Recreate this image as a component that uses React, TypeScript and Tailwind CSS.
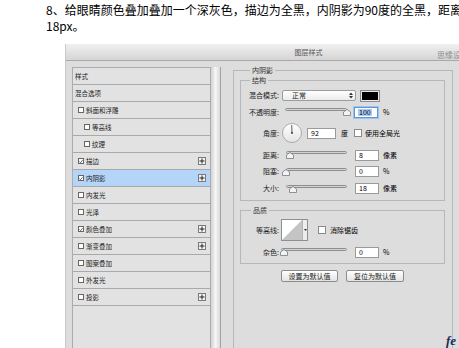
import React from 'react';

const font = "font-['Noto_Sans_CJK_SC','Noto_Sans',sans-serif]";

const layers = [
  { label: '样式', box: false, indent: 0 },
  { label: '混合选项', box: false, indent: 0 },
  { label: '斜面和浮雕', box: true, indent: 5 },
  { label: '等高线', box: true, indent: 11 },
  { label: '纹理', box: true, indent: 11 },
  { label: '描边', box: true, checked: true, plus: true, indent: 5 },
  { label: '内阴影', box: true, checked: true, plus: true, active: true, indent: 5 },
  { label: '内发光', box: true, indent: 5 },
  { label: '光泽', box: true, indent: 5 },
  { label: '颜色叠加', box: true, checked: true, plus: true, indent: 5 },
  { label: '渐变叠加', box: true, plus: true, indent: 5 },
  { label: '图案叠加', box: true, indent: 5 },
  { label: '外发光', box: true, indent: 5 },
  { label: '投影', box: true, plus: true, indent: 5 },
];

const SmallCheck = ({ checked }: { checked?: boolean }) => (
  <span className="w-[6px] h-[6px] border border-[#666] bg-white flex items-center justify-center shrink-0">
    {checked && (
      <svg width="5" height="5" viewBox="0 0 5 5">
        <path d="M0.5 2.5 L2 4 L4.5 0.8" fill="none" stroke="#333" strokeWidth="0.9" />
      </svg>
    )}
  </span>
);

const PlusBox = () => (
  <span className="ml-auto mr-[4px] w-[8px] h-[8px] border border-[#7a7a7a] bg-[#f4f4f4] flex items-center justify-center">
    <svg width="6" height="6" viewBox="0 0 6 6">
      <path d="M3 0.5 V5.5 M0.5 3 H5.5" stroke="#222" strokeWidth="1" />
    </svg>
  </span>
);

const Slider = ({ width, pct }: { width: number; pct: number }) => (
  <div className="relative h-[10px] shrink-0" style={{ width }}>
    <div className="absolute left-0 right-0 top-[1px] h-[3px] rounded-[2px] border border-[#8e8e8e] bg-gradient-to-b from-[#b9b9b9] to-[#ededed]" />
    <svg
      className="absolute top-[2px]"
      style={{ left: Math.round(pct * width) - 4 }}
      width="8"
      height="7"
      viewBox="0 0 8 7"
    >
      <polygon points="0.5,6.5 0.5,3 4,0.5 7.5,3 7.5,6.5" fill="#f3f3f3" stroke="#7a7a7a" strokeWidth="0.8" />
    </svg>
  </div>
);

const Field = ({ value, w, ml, focus }: { value: string; w: string; ml: string; focus?: boolean }) => (
  <div
    className={`${w} ${ml} h-[11px] bg-white flex items-center pl-[3px] text-[7px] leading-none shrink-0 ${
      focus ? 'border border-[#5d95d6] shadow-[0_0_0_1px_#9ec3ee]' : 'border border-[#9a9a9a]'
    }`}
  >
    {focus ? <span className="bg-[#a9c9f2] px-[1px]">{value}</span> : value}
  </div>
);

const Label = ({ children }: { children: React.ReactNode }) => (
  <span className="w-[38px] text-right text-[7px] leading-none text-[#222] shrink-0">{children}</span>
);

const Check = ({ ml }: { ml: string }) => (
  <span className={`block ${ml} w-[8px] h-[8px] border border-[#8a8a8a] bg-white shrink-0`} />
);

export default function App() {
  return (
    <div className={`relative w-[459px] h-[348px] overflow-hidden bg-white ${font}`}>
      <div className="pl-[46px] pt-[2px] text-[12px] leading-[16px] text-black whitespace-nowrap">
        <p>8、给眼睛颜色叠加叠加一个深灰色，描边为全黑，内阴影为90度的全黑，距离</p>
        <p>18px。</p>
      </div>

      <div className="ml-[65px] mt-[10px] w-[486px] bg-[#dddddd] border-l border-[#c9c9c9]">
        <div className="h-[17px] bg-gradient-to-b from-[#f0f0f0] to-[#d5d5d5] border-b border-[#a9a9a9] flex items-center justify-center text-[7px] text-[#555]">
          图层样式
        </div>

        <div className="flex items-start pl-[6px] h-[300px]">
          <div className="flex mt-[6px] h-[290px]">
            <div className="w-[139px] border border-[#acacac] bg-[#e2e2e2] flex flex-col">
              {layers.map((l) => (
                <div
                  key={l.label}
                  className={`h-[17px] shrink-0 border-b border-[#a9a9a9] flex items-center gap-[2px] text-[6.5px] leading-none text-[#222] ${
                    l.active ? 'bg-[#b5d5f8]' : ''
                  }`}
                  style={{ paddingLeft: l.box ? l.indent : 2 }}
                >
                  {l.box && <SmallCheck checked={l.checked} />}
                  <span>{l.label}</span>
                  {l.plus && <PlusBox />}
                </div>
              ))}
            </div>
            <div className="w-[10px] bg-gradient-to-r from-[#d2d2d2] via-[#f6f6f6] to-[#dadada] border-r border-[#a2a2a2]" />
          </div>

          <fieldset className="ml-[12px] mt-[4px] w-[220px] h-[300px] border border-[#b7b7b7] pl-[6px] pr-[7px]">
            <legend className="ml-[10px] px-[2px] text-[7px] leading-[10px] text-[#333]">内阴影</legend>

            <fieldset className="w-[205px] border border-[#b7b7b7] pt-[3px] pb-[3px]">
              <legend className="ml-[9px] px-[2px] text-[7px] leading-[10px] text-[#333]">结构</legend>

              <div className="h-[15px] flex items-center">
                <Label>混合模式:</Label>
                <div className="ml-[3px] w-[74px] h-[11px] rounded-[2px] border border-[#9c9c9c] bg-gradient-to-b from-white to-[#ececec] flex items-center pl-[9px] pr-[2px] text-[7px] leading-none text-[#222]">
                  <span>正常</span>
                  <svg className="ml-auto" width="4" height="7" viewBox="0 0 4 7">
                    <path d="M0 3 L2 0.5 L4 3 Z M0 4 L2 6.5 L4 4 Z" fill="#333" />
                  </svg>
                </div>
                <div className="ml-[4px] w-[20px] h-[12px] border border-[#8a8a8a] p-[1px] bg-[#e8e8e8]">
                  <div className="w-full h-full bg-black" />
                </div>
              </div>

              <div className="mt-[1px] h-[16px] flex items-center">
                <Label>不透明度:</Label>
                <div className="ml-[6px]">
                  <Slider width={62} pct={1} />
                </div>
                <Field value="100" w="w-[24px]" ml="ml-[7px]" focus />
                <span className="ml-[5px] text-[7px] leading-none">%</span>
              </div>

              <div className="mt-[2px] h-[22px] flex items-center">
                <Label>角度:</Label>
                <svg className="ml-[3px] shrink-0" width="20" height="20" viewBox="0 0 20 20">
                  <defs>
                    <linearGradient id="dial" x1="0" y1="0" x2="0" y2="1">
                      <stop offset="0" stopColor="#ffffff" />
                      <stop offset="1" stopColor="#e4e4e4" />
                    </linearGradient>
                  </defs>
                  <circle cx="10" cy="10" r="9.5" fill="url(#dial)" stroke="#9a9a9a" strokeWidth="0.8" />
                  <line x1="10" y1="10" x2="9.7" y2="2" stroke="#333" strokeWidth="0.8" />
                  <circle cx="10" cy="10" r="0.9" fill="#333" />
                </svg>
                <Field value="92" w="w-[29px]" ml="ml-[5px]" />
                <span className="ml-[5px] text-[7px] leading-none">度</span>
                <Check ml="ml-[6px]" />
                <span className="ml-[3px] text-[7px] leading-none">使用全局光</span>
              </div>

              <div className="mt-[3px] h-[16px] flex items-center">
                <Label>距离:</Label>
                <div className="ml-[7px]">
                  <Slider width={61} pct={0.06} />
                </div>
                <Field value="8" w="w-[24px]" ml="ml-[8px]" />
                <span className="ml-[4px] text-[7px] leading-none">像素</span>
              </div>

              <div className="h-[17px] flex items-center">
                <Label>阻塞:</Label>
                <div className="ml-[7px]">
                  <Slider width={61} pct={0} />
                </div>
                <Field value="0" w="w-[24px]" ml="ml-[8px]" />
                <span className="ml-[4px] text-[7px] leading-none">%</span>
              </div>

              <div className="h-[17px] flex items-center">
                <Label>大小:</Label>
                <div className="ml-[7px]">
                  <Slider width={61} pct={0.11} />
                </div>
                <Field value="18" w="w-[24px]" ml="ml-[8px]" />
                <span className="ml-[4px] text-[7px] leading-none">像素</span>
              </div>
            </fieldset>

            <fieldset className="mt-[4px] w-[205px] border border-[#b7b7b7] pt-[4px] pb-[5px]">
              <legend className="ml-[10px] px-[2px] text-[7px] leading-[10px] text-[#333]">品质</legend>

              <div className="h-[22px] flex items-center">
                <Label>等高线:</Label>
                <div className="ml-[2px] flex h-[22px] border border-[#8f8f8f] bg-white">
                  <svg width="20" height="20" viewBox="0 0 20 20">
                    <polygon points="0,20 20,0 20,20" fill="#c4c4c4" />
                  </svg>
                  <div className="w-[5px] border-l border-[#b5b5b5] bg-[#ededed] flex items-center justify-center">
                    <svg width="3" height="2" viewBox="0 0 3 2">
                      <path d="M0 0 L3 0 L1.5 2 Z" fill="#333" />
                    </svg>
                  </div>
                </div>
                <Check ml="ml-[10px]" />
                <span className="ml-[4px] text-[7px] leading-none">消除锯齿</span>
              </div>

              <div className="mt-[5px] h-[12px] flex items-center">
                <Label>杂色:</Label>
                <div className="ml-[2px]">
                  <Slider width={66} pct={0.05} />
                </div>
                <Field value="0" w="w-[24px]" ml="ml-[8px]" />
                <span className="ml-[4px] text-[7px] leading-none">%</span>
              </div>
            </fieldset>

            <div className="w-[205px] mt-[6px] flex justify-center gap-[8px]">
              <button className="w-[57px] h-[12px] rounded-[2px] border border-[#8c8c8c] bg-gradient-to-b from-white to-[#e4e4e4] text-[7px] leading-none text-[#222]">
                设置为默认值
              </button>
              <button className="w-[58px] h-[12px] rounded-[2px] border border-[#8c8c8c] bg-gradient-to-b from-white to-[#e4e4e4] text-[7px] leading-none text-[#222]">
                复位为默认值
              </button>
            </div>
          </fieldset>
        </div>
      </div>

      <span className="absolute left-[437px] top-[51px] text-[8px] leading-none text-[#8d8d8d] whitespace-nowrap">思缘设计</span>
      <span className="absolute left-[446px] top-[334px] text-[13px] leading-none font-bold italic text-[#1b2b5c] font-['Liberation_Serif',serif]">fe</span>
    </div>
  );
}
